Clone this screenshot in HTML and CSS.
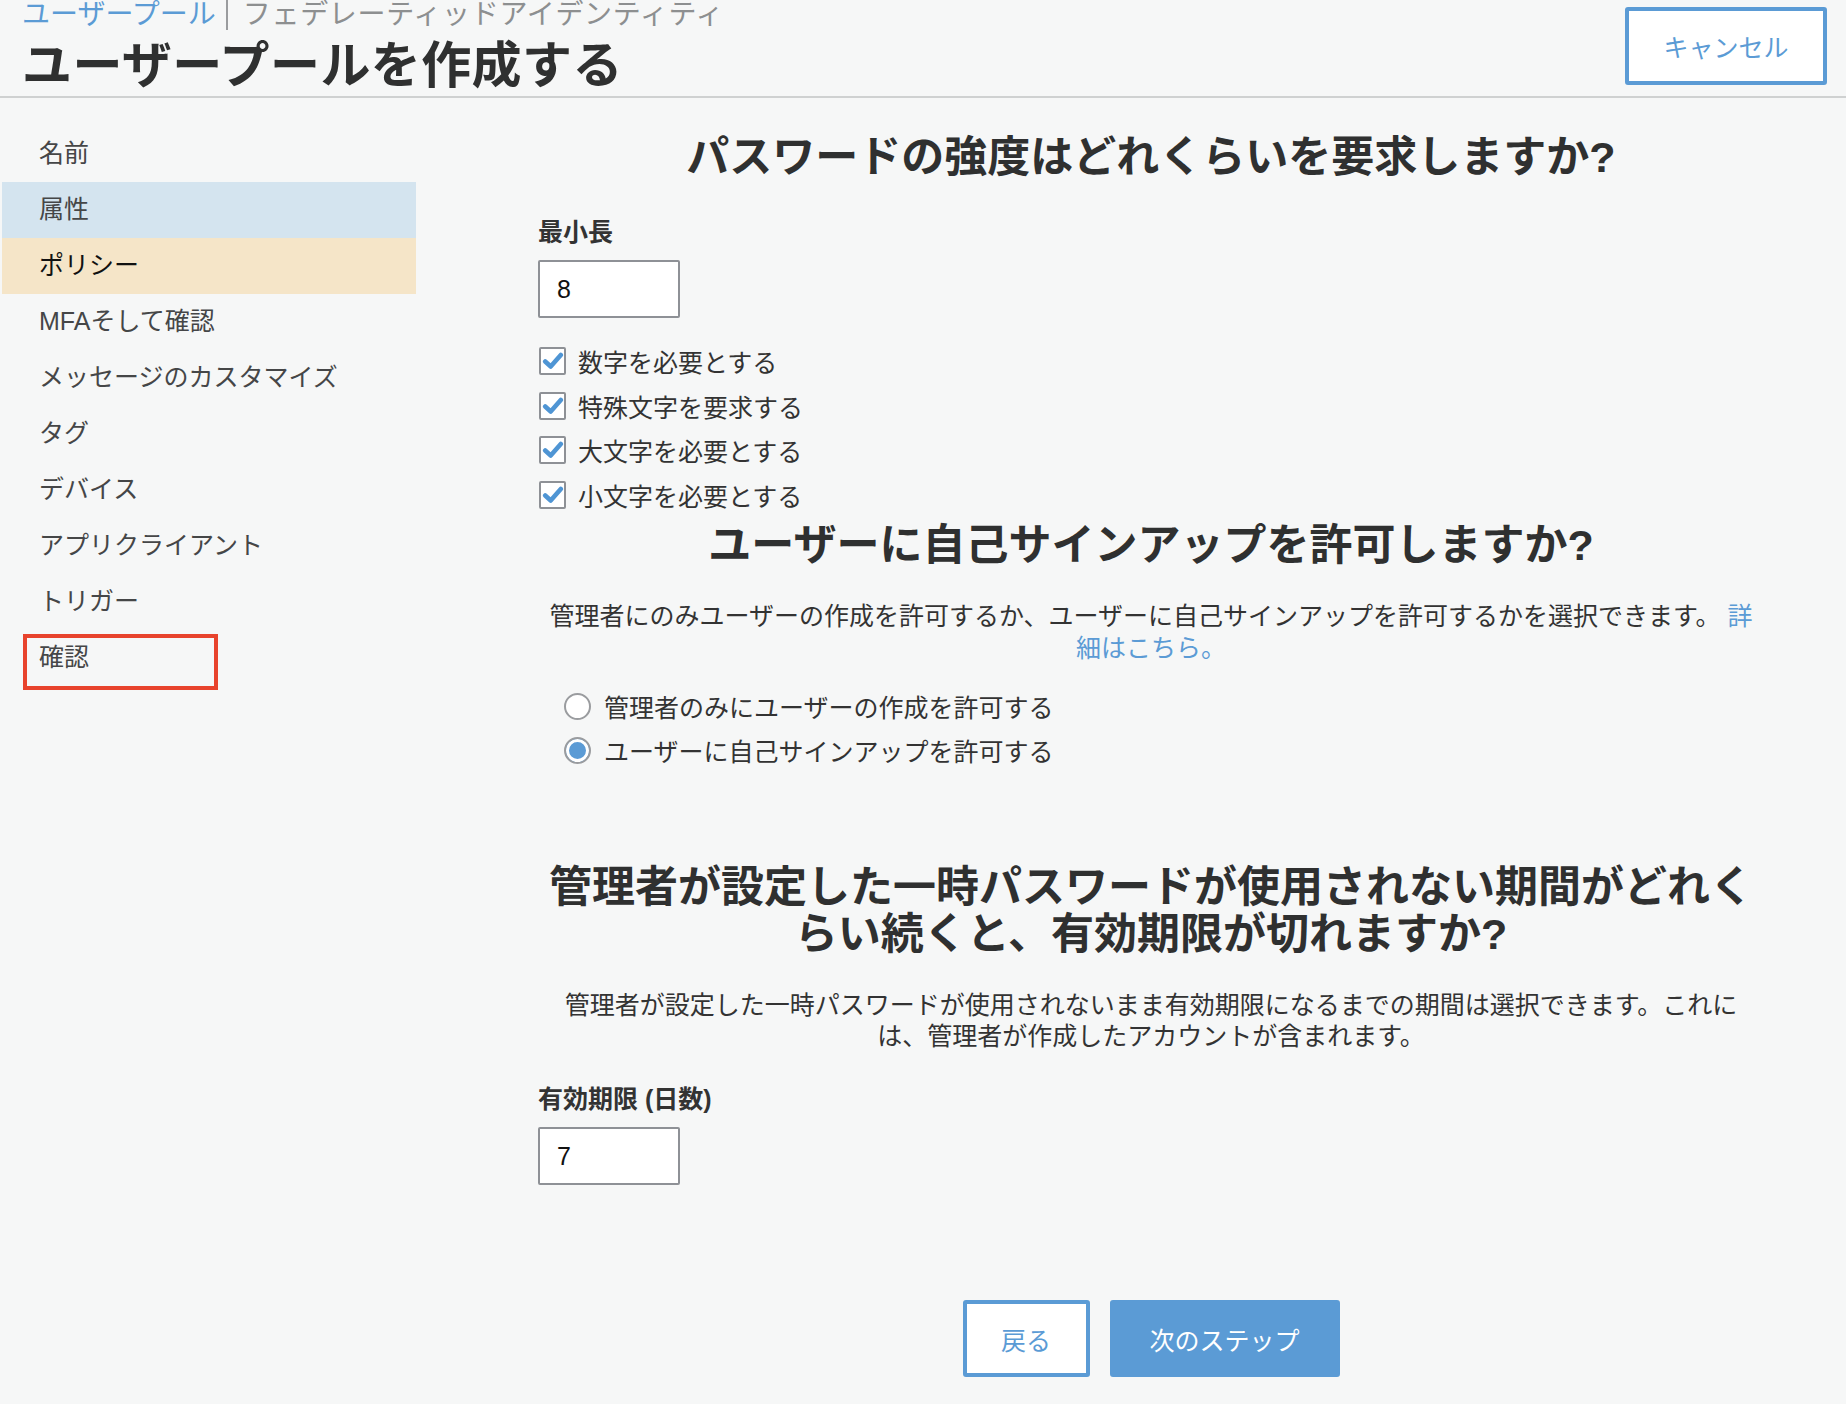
FILE: index.html
```html
<!DOCTYPE html>
<html lang="ja">
<head>
<meta charset="utf-8">
<title>ユーザープールを作成する</title>
<link rel="stylesheet" href="styles.css">
</head>
<body>
<header class="page-header">
  <div class="titles">
    <div class="breadcrumb">
      <a class="crumb-link" href="#">ユーザープール</a><span class="crumb-current">フェデレーティッドアイデンティティ</span>
    </div>
    <h1 class="page-title">ユーザープールを作成する</h1>
  </div>
  <button class="btn btn-outline btn-cancel" type="button">キャンセル</button>
</header>

<div class="layout">
  <nav class="sidebar">
    <ul class="steps">
      <li class="step">名前</li>
      <li class="step step-done">属性</li>
      <li class="step step-active">ポリシー</li>
      <li class="step">MFAそして確認</li>
      <li class="step">メッセージのカスタマイズ</li>
      <li class="step">タグ</li>
      <li class="step">デバイス</li>
      <li class="step">アプリクライアント</li>
      <li class="step">トリガー</li>
      <li class="step step-marked">確認</li>
    </ul>
  </nav>

  <main class="content">
    <h2 class="question q-strength">パスワードの強度はどれくらいを要求しますか?</h2>

    <div class="field-label label-min">最小長</div>
    <div class="text-input">8</div>

    <ul class="checklist">
      <li class="check-row"><span class="checkbox"><svg viewBox="0 0 24 24" width="22" height="22"><path d="M3.5 12.5 L9.5 18 L20.5 5.5" fill="none" stroke="#4f95d4" stroke-width="5" stroke-linecap="round" stroke-linejoin="round"/></svg></span><span class="check-text">数字を必要とする</span></li>
      <li class="check-row"><span class="checkbox"><svg viewBox="0 0 24 24" width="22" height="22"><path d="M3.5 12.5 L9.5 18 L20.5 5.5" fill="none" stroke="#4f95d4" stroke-width="5" stroke-linecap="round" stroke-linejoin="round"/></svg></span><span class="check-text">特殊文字を要求する</span></li>
      <li class="check-row"><span class="checkbox"><svg viewBox="0 0 24 24" width="22" height="22"><path d="M3.5 12.5 L9.5 18 L20.5 5.5" fill="none" stroke="#4f95d4" stroke-width="5" stroke-linecap="round" stroke-linejoin="round"/></svg></span><span class="check-text">大文字を必要とする</span></li>
      <li class="check-row"><span class="checkbox"><svg viewBox="0 0 24 24" width="22" height="22"><path d="M3.5 12.5 L9.5 18 L20.5 5.5" fill="none" stroke="#4f95d4" stroke-width="5" stroke-linecap="round" stroke-linejoin="round"/></svg></span><span class="check-text">小文字を必要とする</span></li>
    </ul>

    <h2 class="question q-signup">ユーザーに自己サインアップを許可しますか?</h2>
    <p class="desc desc-signup">管理者にのみユーザーの作成を許可するか、ユーザーに自己サインアップを許可するかを選択できます。 <a class="link" href="#">詳細はこちら。</a></p>

    <ul class="radios">
      <li class="radio-row"><span class="radio"></span><span class="radio-text">管理者のみにユーザーの作成を許可する</span></li>
      <li class="radio-row"><span class="radio radio-on"></span><span class="radio-text">ユーザーに自己サインアップを許可する</span></li>
    </ul>

    <h2 class="question q-expire">管理者が設定した一時パスワードが使用されない期間がどれくらい続くと、有効期限が切れますか?</h2>
    <p class="desc desc-expire">管理者が設定した一時パスワードが使用されないまま有効期限になるまでの期間は選択できます。これには、管理者が作成したアカウントが含まれます。</p>

    <div class="field-label label-days">有効期限 (日数)</div>
    <div class="text-input">7</div>

    <div class="actions">
      <button class="btn btn-outline btn-back" type="button">戻る</button>
      <button class="btn btn-primary btn-next" type="button">次のステップ</button>
    </div>
  </main>
</div>
</body>
</html>
```

FILE: styles.css
```css
*, *::before, *::after { box-sizing: border-box; }

body {
  margin: 0;
  background: #f6f7f7;
  color: #333;
  font-family: "Liberation Sans", "Noto Sans CJK JP", sans-serif;
}

ul { list-style: none; margin: 0; padding: 0; }

/* header */
.page-header {
  display: flex;
  justify-content: space-between;
  align-items: flex-start;
  height: 98px;
  border-bottom: 2px solid #cfd1d1;
}

.titles { padding-left: 22px; }

.breadcrumb {
  display: flex;
  align-items: center;
  font-size: 28px;
  line-height: 30px;
  height: 30px;
}

.crumb-link {
  color: #5b9bd5;
  text-decoration: none;
}

.crumb-current {
  color: #8d8f90;
  margin-left: 10px;
  padding-left: 15px;
  border-left: 2px solid #9a9c9e;
  line-height: 30px;
  letter-spacing: 0.7px;
}

.page-title {
  margin: 8px 0 0;
  font-size: 50px;
  line-height: 56px;
  font-weight: 700;
  color: #2f3030;
  letter-spacing: 0.4px;
}

.btn {
  font-family: inherit;
  font-size: 25px;
  border-radius: 3px;
  cursor: pointer;
}

.btn-outline {
  background: #fff;
  color: #5b9bd5;
  border: 4px solid #5b9bd5;
}

.btn-primary {
  background: #5b9bd5;
  color: #fff;
  border: 4px solid #5b9bd5;
}

.btn-cancel {
  width: 202px;
  height: 78px;
  margin-top: 7px;
  margin-right: 19px;
}

/* layout */
.layout {
  display: flex;
  align-items: flex-start;
}

.sidebar {
  width: 414px;
  margin-left: 2px;
  padding-top: 28px;
}

.step {
  display: flex;
  align-items: center;
  height: 56px;
  padding-left: 37px;
  padding-bottom: 6px;
  font-size: 25px;
  color: #454647;
}

.step-done { background: #d4e4ef; }
.step-active { background: #f5e5c8; color: #111; }

.step-marked { position: relative; }
.step-marked::after {
  content: "";
  position: absolute;
  left: 21px;
  top: 4px;
  width: 195px;
  height: 56px;
  border: 4px solid #e8432d;
}

.content {
  width: 1226px;
  margin-left: 122px;
}

.question {
  margin: 0;
  text-align: center;
  font-size: 43px;
  line-height: 48px;
  font-weight: 700;
  color: #2f3030;
}

.q-strength { margin-top: 35px; }
.q-signup { margin-top: 4px; }
.q-expire { margin-top: 92px; line-height: 47px; }

.field-label {
  font-size: 25px;
  line-height: 30px;
  font-weight: 700;
  color: #333;
}

.label-min { margin-top: 36px; }
.label-days { margin-top: 32px; }

.text-input {
  margin-top: 13px;
  width: 142px;
  height: 58px;
  background: #fff;
  border: 2px solid #8e9196;
  border-radius: 2px;
  padding-left: 17px;
  display: flex;
  align-items: center;
  font-size: 25px;
  color: #111;
}

.checklist { margin-top: 21px; }

.check-row {
  display: flex;
  align-items: center;
  height: 44.5px;
  font-size: 25px;
}

.checkbox {
  width: 27px;
  height: 28px;
  border: 2px solid #8e9196;
  border-radius: 2px;
  background: #fff;
  display: flex;
  align-items: center;
  justify-content: center;
  margin-left: 1px;
  margin-right: 12px;
}

.desc {
  margin: 0;
  text-align: center;
  font-size: 25px;
  color: #333;
}

.desc-signup { margin-top: 31px; line-height: 32px; }
.desc-expire { margin-top: 32px; line-height: 31px; padding: 0 18px; }

.link { color: #5b9bd5; text-decoration: none; }

.radios { margin-top: 20px; padding-left: 26px; }

.radio-row {
  display: flex;
  align-items: center;
  height: 44px;
  font-size: 25px;
}

.radio {
  width: 27px;
  height: 27px;
  border-radius: 50%;
  border: 2px solid #9a9c9f;
  background: #fff;
  margin-right: 13px;
}

.radio-on {
  background: #5b9bd5;
  box-shadow: inset 0 0 0 3px #fff;
}

.actions {
  margin-top: 115px;
  display: flex;
  justify-content: center;
  gap: 20px;
}

.btn-back { width: 127px; height: 77px; }
.btn-next { width: 230px; height: 77px; }
```
